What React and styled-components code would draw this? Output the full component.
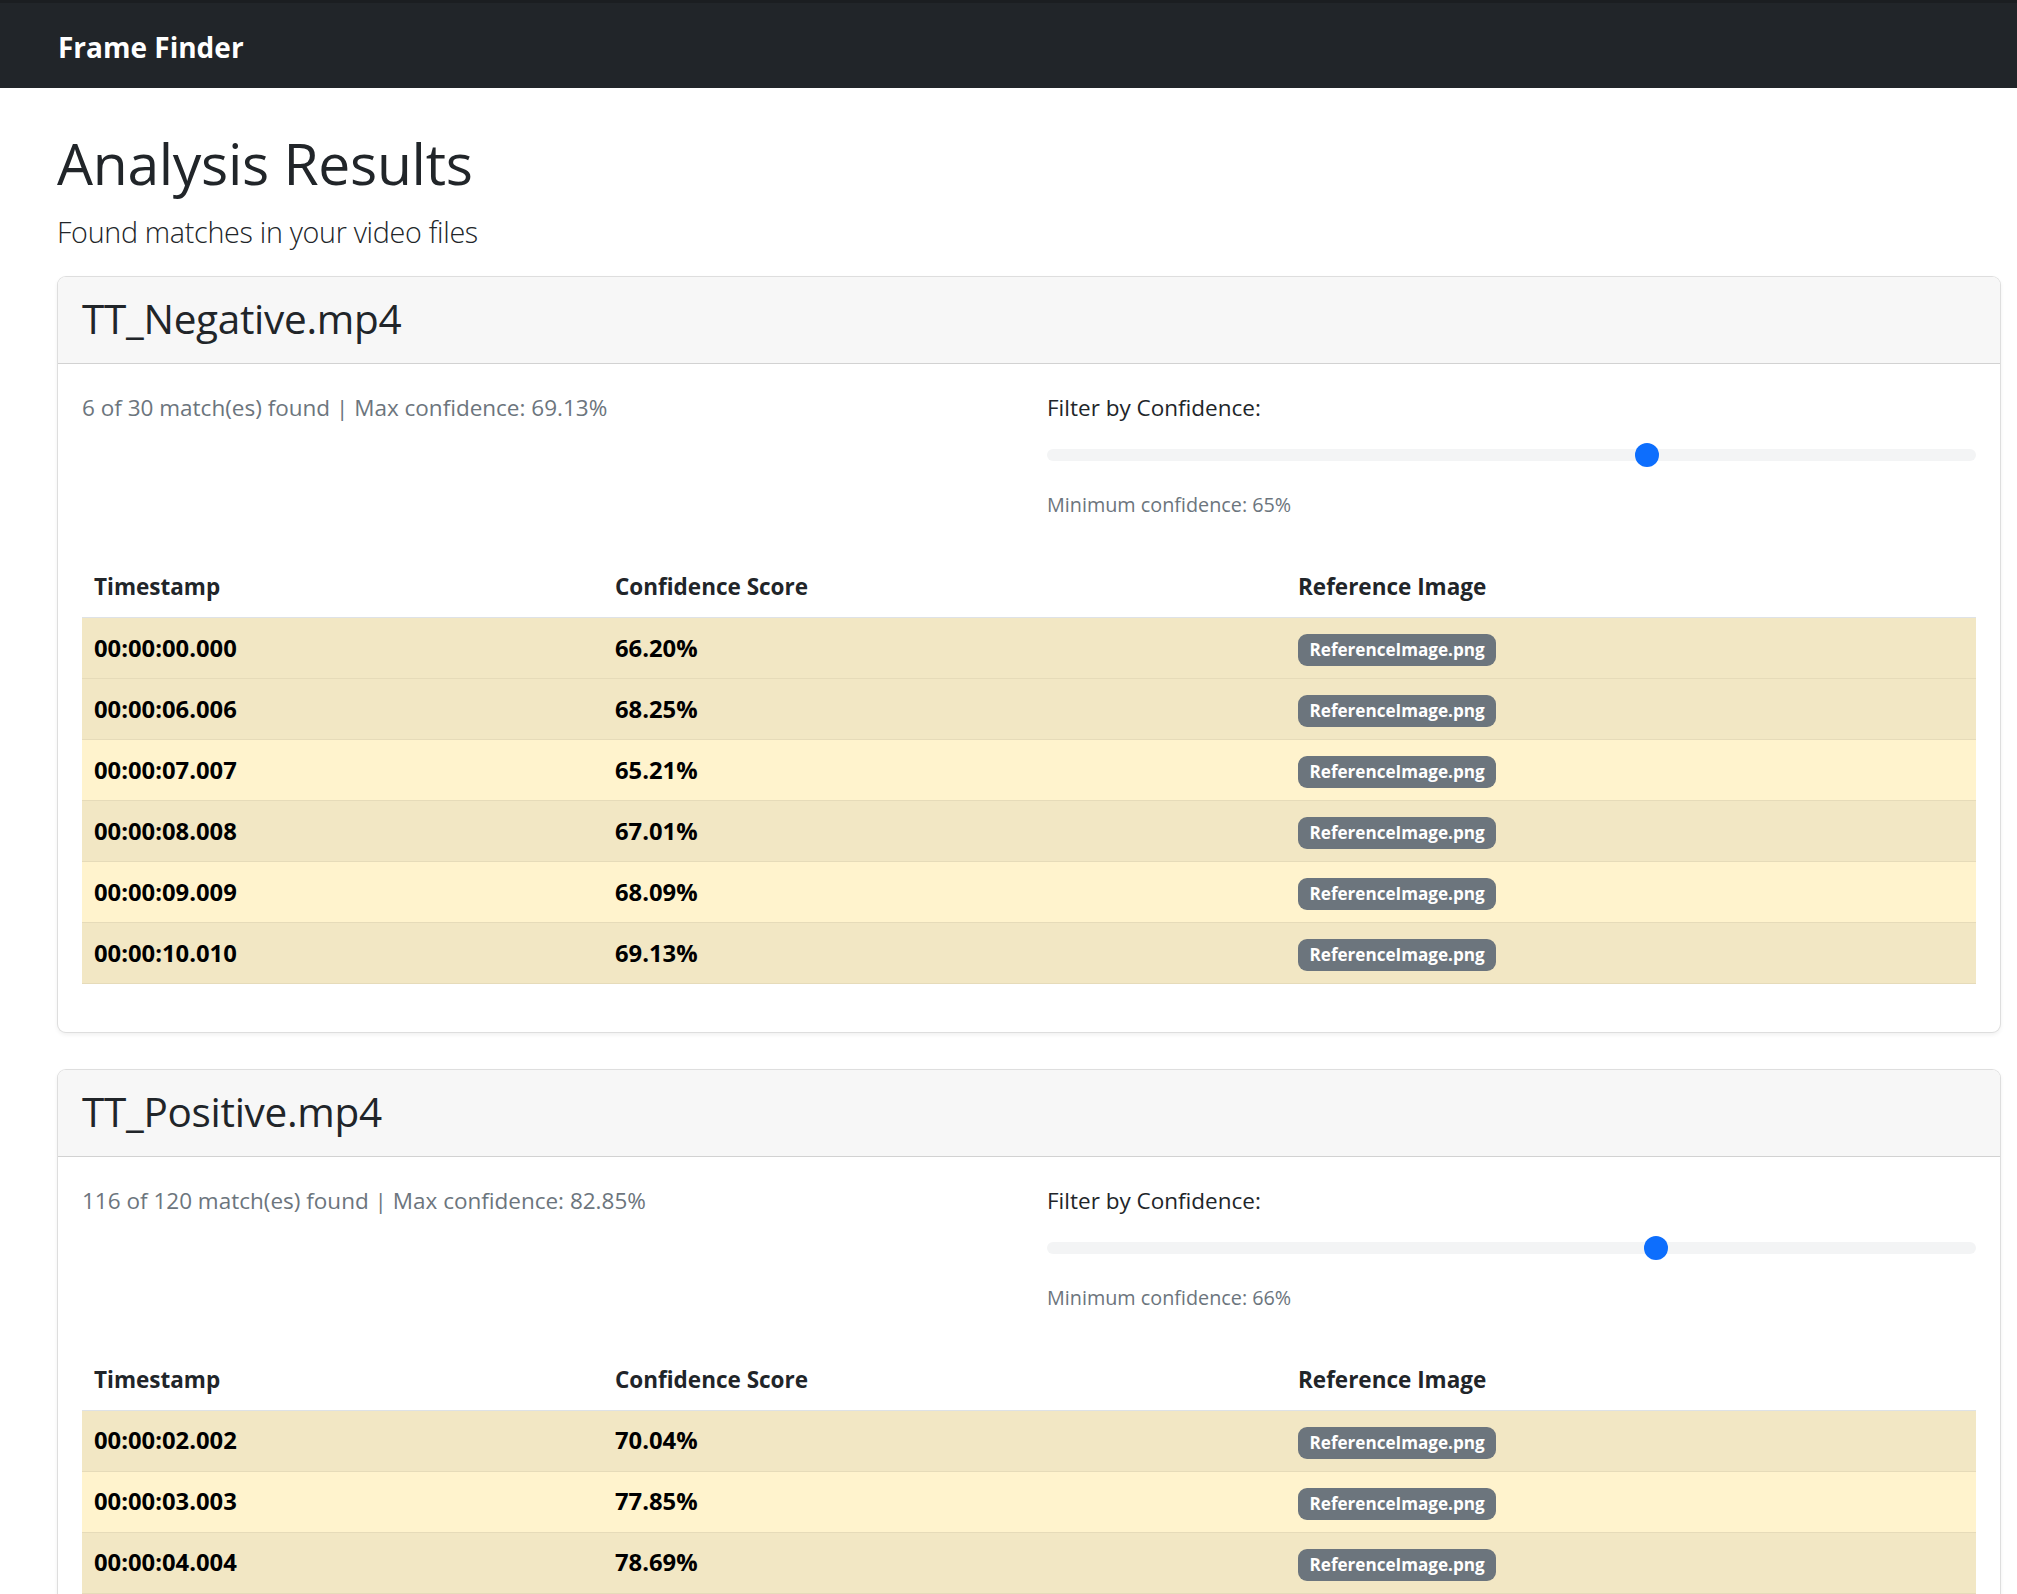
import React, { useState } from "react";
import styled, { createGlobalStyle } from "styled-components";

const GlobalStyle = createGlobalStyle`
	* {
		box-sizing: border-box;
	}
	body {
		margin: 0;
		background: #ffffff;
		color: #212529;
		font-family: "Open Sans", "Noto Sans", "Liberation Sans", sans-serif;
		font-size: 24px;
		line-height: 1.5;
	}
`;

const Navbar = styled.nav`
	display: flex;
	align-items: center;
	height: 88px;
	padding-left: 58px;
	background: #212529;
	border-top: 3px solid #1b1e21;
`;

const Brand = styled.div`
	margin-top: 2px;
	font-size: 28px;
	font-weight: 700;
	color: #ffffff;
	line-height: 1.5;
`;

const Main = styled.main`
	padding: 41px 16px 0 57px;
`;

const Title = styled.h1`
	margin: 0;
	font-size: 57px;
	font-weight: 400;
	line-height: 1.2;
	letter-spacing: -0.3px;
`;

const Lead = styled.p`
	margin: 13px 0 23px;
	font-size: 28.7px;
	font-weight: 300;
	letter-spacing: -0.3px;
	line-height: 1.5;
`;

const Card = styled.section`
	margin-bottom: 36px;
	border: 1px solid rgba(0, 0, 0, 0.13);
	border-radius: 9px;
	background: #ffffff;
	box-shadow: 0 2px 4px rgba(0, 0, 0, 0.06);
	overflow: hidden;
`;

const CardHeader = styled.header`
	display: flex;
	align-items: center;
	height: 87px;
	padding: 0 24px 3px;
	background: #f7f7f7;
	border-bottom: 1px solid rgba(0, 0, 0, 0.15);
`;

const FileName = styled.h3`
	margin: 0;
	font-size: 40.5px;
	font-weight: 400;
	letter-spacing: -0.3px;
	line-height: 1.2;
`;

const CardBody = styled.div`
	padding: 27px 24px 48px;
`;

const Controls = styled.div`
	display: grid;
	grid-template-columns: 1fr 1fr;
	column-gap: 36px;
	margin-bottom: 37px;
`;

const Stats = styled.p`
	margin: 0;
	font-size: 22.5px;
	color: #6c757d;
`;

const FilterLabel = styled.label`
	display: block;
	margin-bottom: 12px;
	font-size: 22.5px;
`;

const Range = styled.input.attrs({ type: "range", min: 0, max: 100 })`
	display: block;
	width: 100%;
	height: 36px;
	margin: 0;
	padding: 0;
	background: transparent;
	appearance: none;
	-webkit-appearance: none;

	&::-webkit-slider-runnable-track {
		height: 12px;
		border-radius: 12px;
		background: #f3f4f5;
	}
	&::-webkit-slider-thumb {
		-webkit-appearance: none;
		width: 24px;
		height: 24px;
		margin-top: -6px;
		border: 0;
		border-radius: 50%;
		background: #0d6efd;
	}
	&::-moz-range-track {
		height: 12px;
		border-radius: 12px;
		background: #f3f4f5;
	}
	&::-moz-range-thumb {
		width: 24px;
		height: 24px;
		border: 0;
		border-radius: 50%;
		background: #0d6efd;
	}
`;

const Hint = styled.div`
	margin-top: 17px;
	font-size: 19.8px;
	color: #6c757d;
`;

const Table = styled.table`
	width: 100%;
	border-collapse: collapse;
	font-size: 22.5px;
`;

const HeadCell = styled.th`
	width: ${props => props.width || "auto"};
	height: 61px;
	padding: 0 12px;
	text-align: left;
	vertical-align: middle;
	font-weight: 700;
	line-height: 1.5;
	color: #212529;
	border-bottom: 1px solid #dee2e6;
`;

const Row = styled.tr`
	background: ${props => (props.dark ? "#f2e7c4" : "#fff3cd")};
	border-bottom: 1px solid #e6dbb9;
`;

const Cell = styled.td`
	height: 61px;
	padding: 0 12px;
	vertical-align: middle;
	line-height: 1.5;
	font-size: 23.8px;
	font-weight: 700;
	color: #000000;
`;

const Badge = styled.span`
	display: inline-block;
	padding: 7px 11.5px 8px;
	border-radius: 9px;
	background: #6c757d;
	color: #ffffff;
	font-size: 17.1px;
	font-weight: 700;
	line-height: 1;
	vertical-align: middle;
`;

const results = [
	{
		file: "TT_Negative.mp4",
		shown: 6,
		total: 30,
		max: "69.13%",
		min: 65,
		rows: [
			{ time: "00:00:00.000", score: "66.20%", dark: true },
			{ time: "00:00:06.006", score: "68.25%", dark: true },
			{ time: "00:00:07.007", score: "65.21%", dark: false },
			{ time: "00:00:08.008", score: "67.01%", dark: true },
			{ time: "00:00:09.009", score: "68.09%", dark: false },
			{ time: "00:00:10.010", score: "69.13%", dark: true },
		],
	},
	{
		file: "TT_Positive.mp4",
		shown: 116,
		total: 120,
		max: "82.85%",
		min: 66,
		rows: [
			{ time: "00:00:02.002", score: "70.04%", dark: true },
			{ time: "00:00:03.003", score: "77.85%", dark: false },
			{ time: "00:00:04.004", score: "78.69%", dark: true },
			{ time: "00:00:05.005", score: "79.12%", dark: false },
			{ time: "00:00:06.006", score: "80.33%", dark: true },
		],
	},
];

const ResultCard = ({ result }) => {
	const [min, setMin] = useState(result.min);
	return (
		<Card>
			<CardHeader>
				<FileName>{result.file}</FileName>
			</CardHeader>
			<CardBody>
				<Controls>
					<Stats>
						{result.shown} of {result.total} match(es) found | Max confidence: {result.max}
					</Stats>
					<div>
						<FilterLabel>Filter by Confidence:</FilterLabel>
						<Range value={min} onChange={e => setMin(Number(e.target.value))} />
						<Hint>Minimum confidence: {min}%</Hint>
					</div>
				</Controls>
				<Table>
					<thead>
						<tr>
							<HeadCell width="521px">Timestamp</HeadCell>
							<HeadCell width="683px">Confidence Score</HeadCell>
							<HeadCell>Reference Image</HeadCell>
						</tr>
					</thead>
					<tbody>
						{result.rows.map(row => (
							<Row key={row.time} dark={row.dark}>
								<Cell>{row.time}</Cell>
								<Cell>{row.score}</Cell>
								<Cell>
									<Badge>ReferenceImage.png</Badge>
								</Cell>
							</Row>
						))}
					</tbody>
				</Table>
			</CardBody>
		</Card>
	);
};

const App = () => (
	<>
		<GlobalStyle />
		<Navbar>
			<Brand>Frame Finder</Brand>
		</Navbar>
		<Main>
			<Title>Analysis Results</Title>
			<Lead>Found matches in your video files</Lead>
			{results.map(result => (
				<ResultCard key={result.file} result={result} />
			))}
		</Main>
	</>
);

export default App;
